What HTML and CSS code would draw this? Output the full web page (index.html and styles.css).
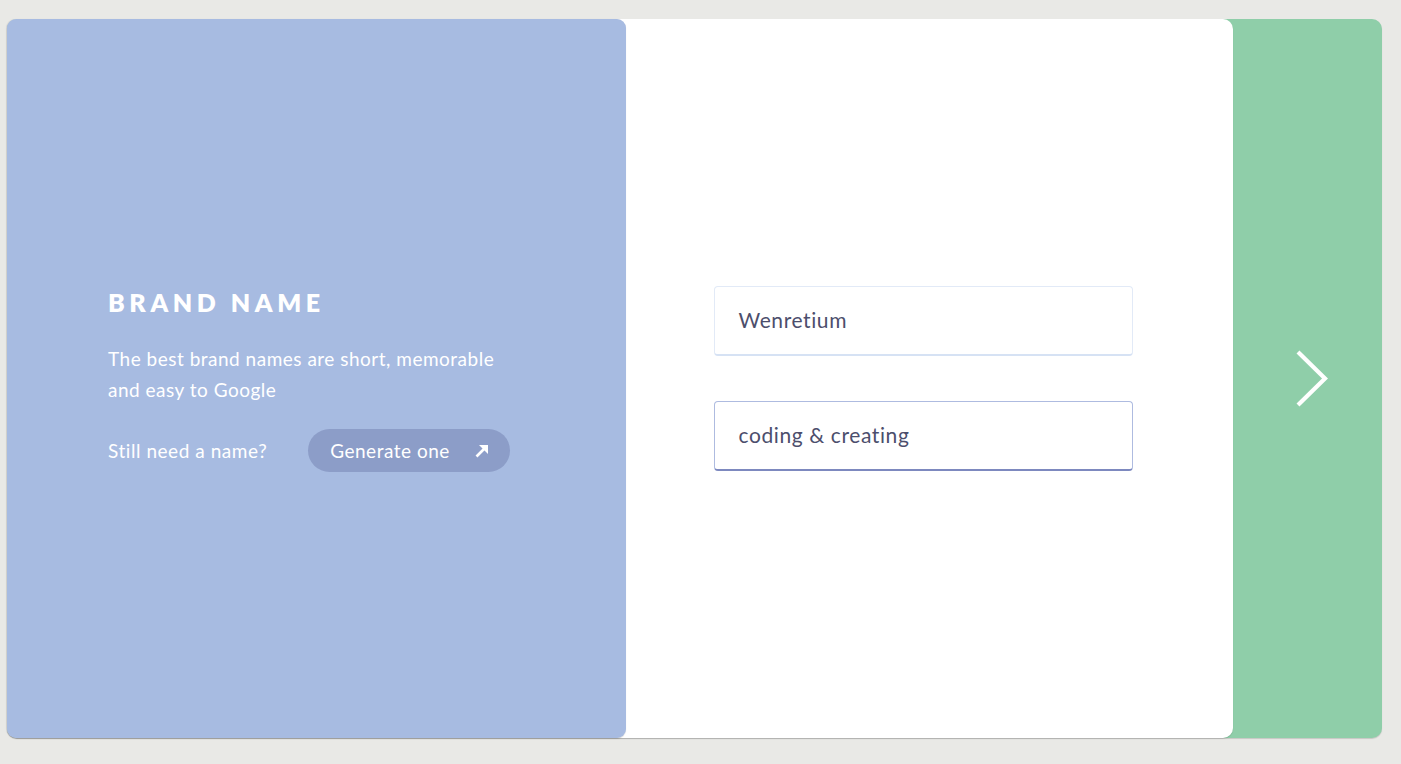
FILE: index.html
```html
<!DOCTYPE html>
<html>
<head>
<meta charset="utf-8">
<link rel="stylesheet" href="styles.css">
</head>
<body>
<div class="stage">
  <div class="card">
    <section class="intro">
      <div class="intro-inner">
        <h1 class="title">BRAND NAME</h1>
        <p class="desc">The best brand names are short, memorable<br>and easy to Google</p>
        <div class="gen-row">
          <span class="still">Still need a name?</span>
          <button class="gen-btn">Generate one
            <svg class="gen-arrow" width="16" height="16" viewBox="0 0 16 16"><path d="M2.5 13.5 L11.5 4.5" stroke="#fff" stroke-width="2.6" fill="none"/><path d="M5 2 H14 V11 Z" fill="#fff"/></svg>
          </button>
        </div>
      </div>
    </section>
    <section class="form">
      <div class="fields">
        <div class="field">Wenretium</div>
        <div class="field focused">coding &amp; creating</div>
      </div>
    </section>
  </div>
  <div class="next">
    <svg width="34" height="58" viewBox="0 0 34 58"><path d="M3 2 L30 28.5 L3 55" stroke="#fff" stroke-width="4.2" fill="none"/></svg>
  </div>
</div>
</body>
</html>
```
FILE: styles.css
```css
html, body { margin: 0; padding: 0; }
body {
  background: #e9e9e6;
  font-family: Lato, "Open Sans", sans-serif;
  width: 1401px;
  height: 764px;
  overflow: hidden;
}
.stage {
  margin: 19px 0 0 7px;
  width: 1375px;
  height: 719px;
  background: #8fcea9;
  border-radius: 10px;
  display: flex;
  box-shadow: 0 1px 1px rgba(0,0,0,0.15);
}
.card {
  width: 1226px;
  height: 100%;
  background: #fff;
  border-radius: 10px;
  display: flex;
  box-shadow: 0 1px 1px rgba(0,0,0,0.12);
}
.intro {
  width: 619px;
  height: 100%;
  background: #a7bbe1;
  border-radius: 9px;
  box-shadow: -1px 0 1px rgba(0,0,0,0.08), 0 1px 1px rgba(0,0,0,0.12);
  display: flex;
  align-items: center;
  padding-left: 101px;
  box-sizing: border-box;
}
.intro-inner { color: #fff; padding-top: 2px; }
.title {
  margin: 0;
  font-size: 25px;
  font-weight: 800;
  letter-spacing: 4.6px;
  line-height: 30px;
}
.desc {
  margin: 26px 0 0 0;
  font-size: 19px;
  letter-spacing: 0.5px;
  line-height: 31px;
}
.gen-row {
  margin-top: 24px;
  display: flex;
  align-items: center;
}
.still { font-size: 19px; letter-spacing: 0.55px; }
.gen-btn {
  margin-left: 41px;
  height: 43px;
  width: 202px;
  border: none;
  border-radius: 22px;
  background: #8c9dc8;
  color: #fff;
  font-family: inherit;
  font-size: 19px;
  letter-spacing: 0.5px;
  display: flex;
  align-items: center;
  padding: 0 20px 0 22px;
  justify-content: space-between;
}
.gen-arrow { display: block; }
.form {
  flex: 1;
  display: flex;
  align-items: center;
  justify-content: center;
  padding-right: 13px;
}
.fields {
  width: 419px;
  display: flex;
  flex-direction: column;
  gap: 45px;
}
.field {
  height: 70px;
  box-sizing: border-box;
  border: 1px solid #e2eaf7;
  border-bottom: 2px solid #d6e2f4;
  border-radius: 4px;
  padding: 0 24px 2px;
  display: flex;
  align-items: center;
  font-size: 21px;
  letter-spacing: 0.6px;
  color: #4c4e6c;
}
.field.focused {
  border-color: #aebbe0;
  border-bottom-color: #7d89bf;
}
.next {
  flex: 1;
  display: flex;
  align-items: center;
  justify-content: center;
  padding-left: 9px;
}
.next svg { display: block; }
```
